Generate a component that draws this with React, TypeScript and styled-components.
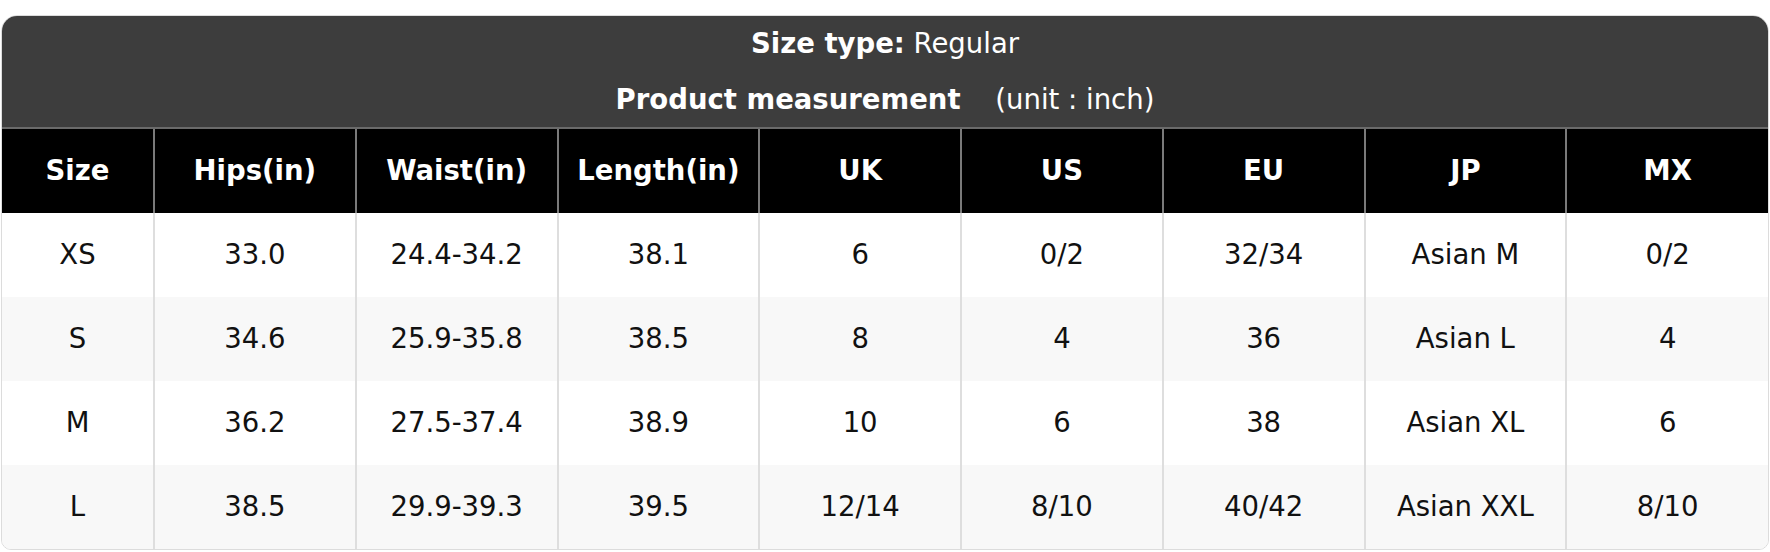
import React from 'react'
import styled, { createGlobalStyle } from 'styled-components'

const GlobalStyle = createGlobalStyle`
  html, body {
    margin: 0;
    padding: 0;
    background: #ffffff;
  }
  body {
    font-family: 'DejaVu Sans', Verdana, sans-serif;
  }
`

const Page = styled.div`
  padding: 15px 1px 0 1px;
`

const Card = styled.div`
  border: 1px solid #dcdcdc;
  border-radius: 16px 16px 10px 10px;
  overflow: hidden;
  background: #ffffff;
`

const Caption = styled.div`
  background: #3d3d3d;
  color: #ffffff;
  text-align: center;
  font-size: 27.5px;
  line-height: 55.5px;
`

const CaptionLine = styled.div``

const Strong = styled.b`
  font-weight: 700;
`

const Unit = styled.span`
  margin-left: 26px;
`

const Table = styled.table`
  width: 100%;
  border-collapse: collapse;
  table-layout: fixed;
  font-size: 27.5px;
`

const HeadCell = styled.th<{ $first?: boolean }>`
  width: ${(p) => (p.$first ? '151px' : 'auto')};
  height: 82px;
  padding: 0 0 2px 0;
  background: #000000;
  color: #ffffff;
  font-weight: 700;
  text-align: center;
  border-top: 2px solid #6a6a6a;
  border-left: 2px solid #7a7a7a;
  &:first-child {
    border-left: none;
  }
`

const Row = styled.tr<{ $alt?: boolean }>`
  background: ${(p) => (p.$alt ? '#f8f8f8' : '#ffffff')};
`

const Cell = styled.td`
  height: 82px;
  padding: 0 0 2px 0;
  text-align: center;
  color: #111111;
  border-left: 2px solid #dedede;
  &:first-child {
    border-left: none;
  }
`

const headers = ['Size', 'Hips(in)', 'Waist(in)', 'Length(in)', 'UK', 'US', 'EU', 'JP', 'MX']

const rows = [
  ['XS', '33.0', '24.4-34.2', '38.1', '6', '0/2', '32/34', 'Asian M', '0/2'],
  ['S', '34.6', '25.9-35.8', '38.5', '8', '4', '36', 'Asian L', '4'],
  ['M', '36.2', '27.5-37.4', '38.9', '10', '6', '38', 'Asian XL', '6'],
  ['L', '38.5', '29.9-39.3', '39.5', '12/14', '8/10', '40/42', 'Asian XXL', '8/10']
]

export default function App() {
  return (
    <>
      <GlobalStyle />
      <Page>
        <Card>
          <Caption>
            <CaptionLine>
              <Strong>Size type:</Strong> Regular
            </CaptionLine>
            <CaptionLine>
              <Strong>Product measurement</Strong> <Unit>(unit : inch)</Unit>
            </CaptionLine>
          </Caption>
          <Table>
            <thead>
              <tr>
                {headers.map((h, i) => (
                  <HeadCell key={h} $first={i === 0}>
                    {h}
                  </HeadCell>
                ))}
              </tr>
            </thead>
            <tbody>
              {rows.map((r, i) => (
                <Row key={r[0]} $alt={i % 2 === 1}>
                  {r.map((c, j) => (
                    <Cell key={j}>{c}</Cell>
                  ))}
                </Row>
              ))}
            </tbody>
          </Table>
        </Card>
      </Page>
    </>
  )
}
